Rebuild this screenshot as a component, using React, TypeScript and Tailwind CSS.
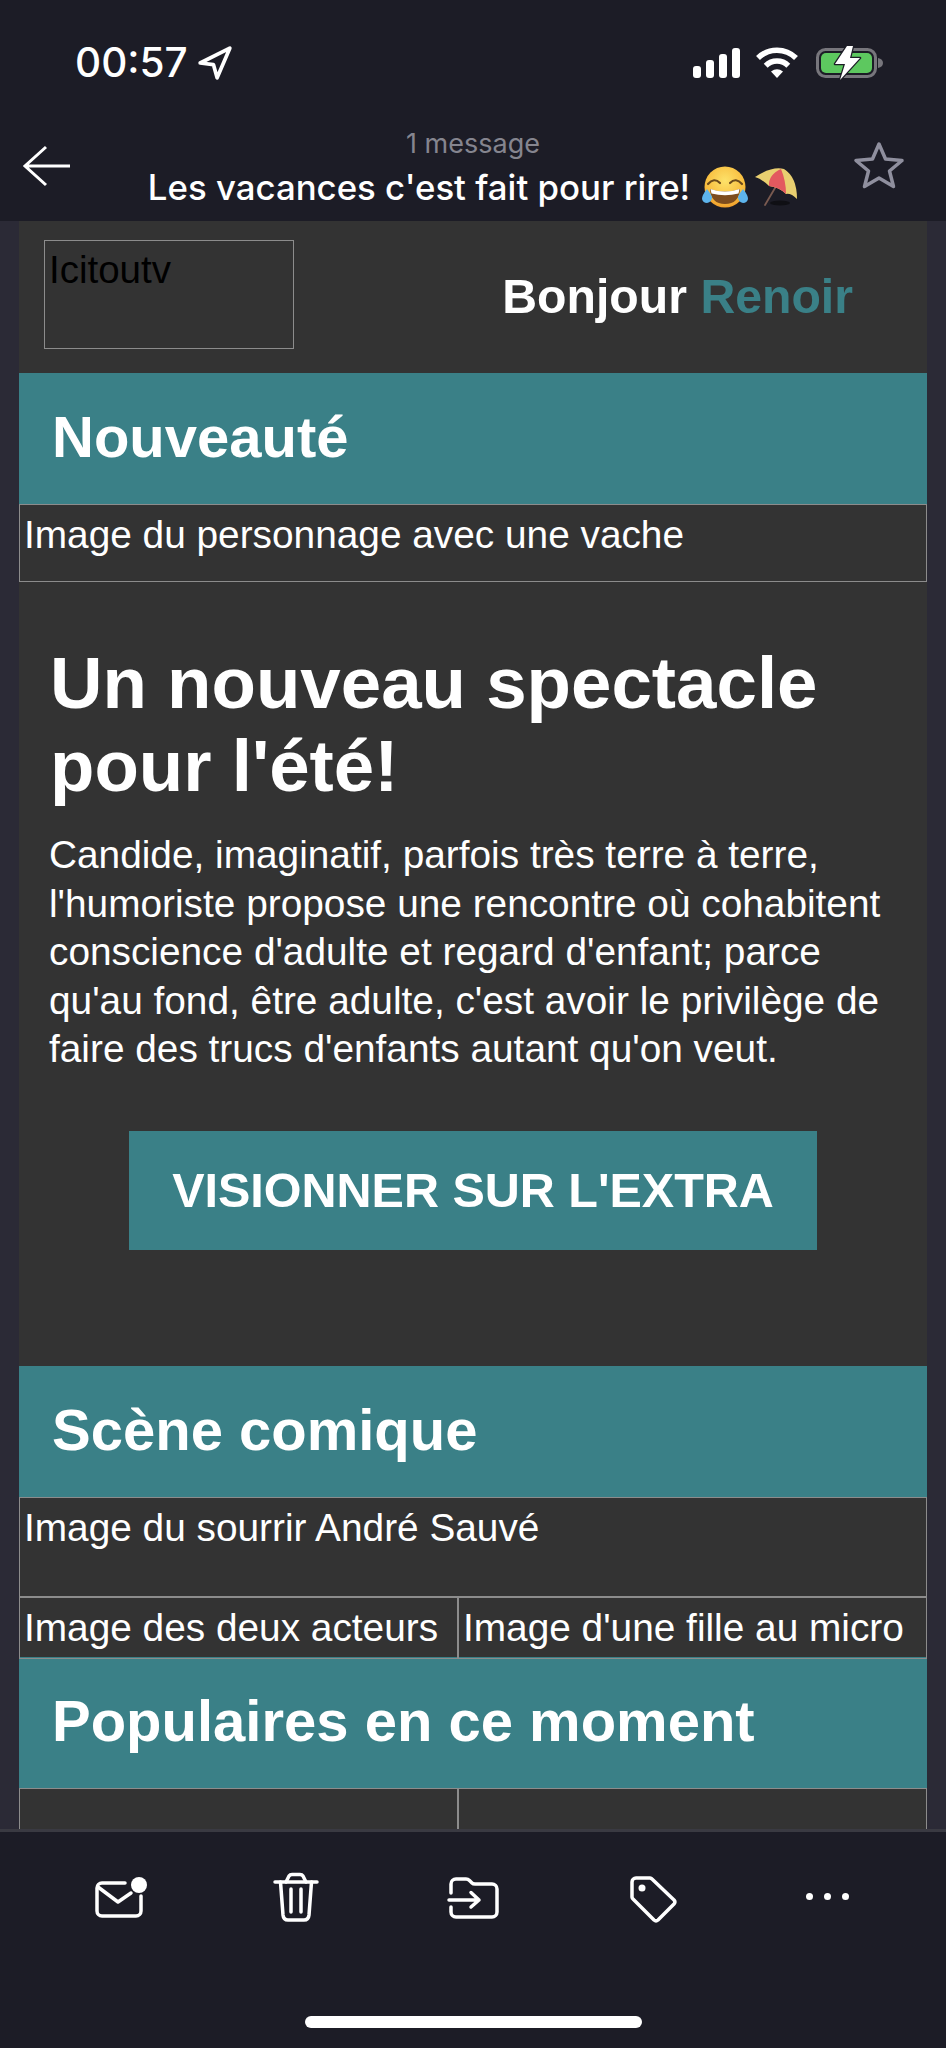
const helvetica = "font-['Liberation_Sans',Arial,sans-serif]";

function StatusBar() {
  return (
    <div className="flex h-[126px] items-start justify-between pt-[41px] pl-[75px] pr-[62px]">
      <div className="flex items-center gap-[9px] text-[40.5px] font-medium leading-[44px] text-white">
        <span>00:57</span>
        <svg width="36" height="36" viewBox="0 0 34 34" fill="none" stroke="white" strokeWidth="3.5" strokeLinejoin="round">
          <path d="M3 17 L31 3 L19 31 L15.5 18.5 Z" />
        </svg>
      </div>
      <div className="flex items-center gap-[16px] pt-[4px]">
        <svg width="48" height="32" viewBox="0 0 48 32" fill="white">
          <rect x="1" y="19" width="8" height="12" rx="3" />
          <rect x="14" y="13" width="8" height="18" rx="3" />
          <rect x="27" y="7" width="8" height="24" rx="3" />
          <rect x="40" y="1" width="8" height="30" rx="3" />
        </svg>
        <svg width="42" height="32" viewBox="0 0 42 32" fill="none" stroke="white" strokeWidth="5.5">
          <path d="M2 11 A27 27 0 0 1 40 11" />
          <path d="M9.7 18.7 A16 16 0 0 1 32.3 18.7" />
          <path d="M21 31 L15 24.5 Q21 20 27 24.5 Z" fill="white" stroke="none" />
        </svg>
        <svg width="70" height="36" viewBox="0 0 70 36" fill="none">
          <rect x="3.5" y="4.5" width="58" height="27" rx="8" stroke="#77767c" strokeWidth="3" />
          <rect x="7" y="8" width="51" height="20" rx="5" fill="#5dc85f" />
          <path d="M64 13 Q69 14 69 18 Q69 22 64 23 Z" fill="#77767c" />
          <path d="M33 1 L21 19 L31 19 L26 35 L46 13 L36 13 L39 1 Z" fill="white" stroke="#1c1c26" strokeWidth="2.5" strokeLinejoin="round" paintOrder="stroke" />
        </svg>
      </div>
    </div>
  );
}

function LaughEmoji() {
  return (
    <svg width="48" height="42" viewBox="0 0 48 42">
      <defs>
        <radialGradient id="face" cx="50%" cy="35%" r="70%">
          <stop offset="0%" stopColor="#fde26a" />
          <stop offset="70%" stopColor="#f8bb3c" />
          <stop offset="100%" stopColor="#ec9528" />
        </radialGradient>
      </defs>
      <circle cx="24" cy="21" r="20.5" fill="url(#face)" />
      <path d="M7 18 Q13 11 19 17 M29 17 Q35 11 41 18" fill="none" stroke="#6b4a1c" strokeWidth="2.2" strokeLinecap="round" />
      <path d="M9 23 Q24 28 39 23 Q38 38 24 38 Q10 38 9 23 Z" fill="#7d4c1e" />
      <path d="M9.5 23 Q24 28 38.5 23 L37.5 27.5 Q24 31 10.5 27.5 Z" fill="white" />
      <path d="M6 23 Q1 29 1 33 Q2 37 6 37 Q11 36 11 31 Q10 28 6 23 Z" fill="#5db4ec" />
      <path d="M42 23 Q47 29 47 33 Q46 37 42 37 Q37 36 37 31 Q38 28 42 23 Z" fill="#5db4ec" />
    </svg>
  );
}

function UmbrellaEmoji() {
  return (
    <svg width="44" height="40" viewBox="0 0 44 40">
      <ellipse cx="26" cy="36" rx="10" ry="2.5" fill="#0f0f14" />
      <path d="M11 38 L31 4" stroke="#7a5a50" strokeWidth="1.8" strokeLinecap="round" />
      <path d="M1 10 Q18 -1 30 2 Q43 10 43 32 Q37 26 32 27 Q25 20 15 19 Q8 12 1 10 Z" fill="#e9cf70" />
      <path d="M15 19 Q14 8 27 2 Q32 14 32 27 Q25 20 15 19 Z" fill="#e3595f" />
    </svg>
  );
}

function NavBar() {
  return (
    <div className="flex h-[95px] items-start">
      <div className="w-[94px] pl-[22px] pt-[18px]">
        <svg width="52" height="44" viewBox="0 0 52 44" fill="none" stroke="white" strokeWidth="3">
          <path d="M3 22 H48 M24 3 L3 22 L24 41" />
        </svg>
      </div>
      <div className="flex flex-1 flex-col items-center">
        <p className="text-[27px] leading-[36px] text-[#85858f]">1 message</p>
        <div className="flex items-center gap-[5px] whitespace-nowrap">
          <span className="mr-[6px] text-[34.8px] font-medium leading-[50px] text-white">Les vacances c'est fait pour rire!</span>
          <LaughEmoji />
          <UmbrellaEmoji />
        </div>
      </div>
      <div className="flex w-[94px] justify-end pr-[41px] pt-[15px]">
        <svg width="52" height="48" viewBox="0 0 52 48" fill="none" stroke="#8f8f9e" strokeWidth="3.5" strokeLinejoin="round">
          <path d="M26 3 L32.5 18 L49 19.5 L36.5 30 L40.5 45.5 L26 37 L11.5 45.5 L15.5 30 L3 19.5 L19.5 18 Z" />
        </svg>
      </div>
    </div>
  );
}

function SectionHead({ title }: { title: string }) {
  return (
    <div className="flex h-[131px] items-center bg-[#3a8087] pb-[3px] pl-[33px]">
      <h2 className="text-[58px] font-bold leading-none text-white">{title}</h2>
    </div>
  );
}

function Cell({ label, className }: { label?: string; className?: string }) {
  return <div className={`border border-[#8c8c8c] pl-[4px] text-[38.8px] leading-[60px] text-white ${className ?? ""}`}>{label}</div>;
}

function ToolBar() {
  return (
    <div className="flex h-[216px] flex-col bg-[#1c1c26]">
      <div className="grid h-[184px] grid-cols-5 items-start px-[30px] pt-[39px]">
        <div className="flex justify-center pl-[6px] pt-[3px]">
          <svg width="60" height="50" viewBox="0 0 60 50" fill="none" stroke="white" strokeWidth="3.5" strokeLinecap="round" strokeLinejoin="round">
            <path d="M33 9 H10 a5 5 0 0 0 -5 5 V37 a5 5 0 0 0 5 5 H44 a5 5 0 0 0 5 -5 V22" />
            <path d="M6 13 L26 28 L39 19" />
            <circle cx="47" cy="11" r="8" fill="white" stroke="none" />
          </svg>
        </div>
        <div className="flex justify-center pl-[1px]">
          <svg width="50" height="54" viewBox="0 0 50 54" fill="none" stroke="white" strokeWidth="3.5" strokeLinecap="round" strokeLinejoin="round">
            <path d="M4 11 H46" />
            <path d="M15 11 L18 5 Q19 3.5 21 3.5 H29 Q31 3.5 32 5 L35 11" />
            <path d="M9.5 11 L12 44 Q12.5 49 17 49 H33 Q37.5 49 38 44 L40.5 11" />
            <path d="M20 18 V41 M30 18 V41" />
          </svg>
        </div>
        <div className="flex justify-center pl-[2px] pt-[4px]">
          <svg width="54" height="46" viewBox="0 0 54 46" fill="none" stroke="white" strokeWidth="3.5" strokeLinecap="round" strokeLinejoin="round">
            <path d="M4 18 V9 a5 5 0 0 1 5 -5 H19 Q21 4 22.5 5.5 L25 8 Q26 9 28 9 H45 a5 5 0 0 1 5 5 V37 a5 5 0 0 1 -5 5 H9 a5 5 0 0 1 -5 -5 V32" />
            <path d="M2 25 H32 M24 17.5 L32 25 L24 32" />
          </svg>
        </div>
        <div className="flex justify-center pl-[6px] pt-[3px]">
          <svg width="50" height="50" viewBox="0 0 50 50" fill="none" stroke="white" strokeWidth="3.5" strokeLinejoin="round">
            <path d="M8 4 H22 a3 3 0 0 1 2 1 L46 26 a3 3 0 0 1 0 4 L30 46 a3 3 0 0 1 -4 0 L5 25 a3 3 0 0 1 -1 -2 V8 a4 4 0 0 1 4 -4 Z" />
            <circle cx="14" cy="14" r="3.5" fill="white" stroke="none" />
          </svg>
        </div>
        <div className="flex h-[50px] items-center justify-center gap-[11px]">
          <span className="h-[7px] w-[7px] rounded-full bg-white" />
          <span className="h-[7px] w-[7px] rounded-full bg-white" />
          <span className="h-[7px] w-[7px] rounded-full bg-white" />
        </div>
      </div>
      <div className="mx-auto h-[12px] w-[337px] rounded-full bg-white" />
    </div>
  );
}

export default function App() {
  return (
    <div className="flex h-[2048px] w-[946px] flex-col overflow-hidden bg-[#1c1c26] font-['Inter',sans-serif]">
      <header className="h-[221px]">
        <StatusBar />
        <NavBar />
      </header>

      <main className={`${helvetica} flex-1 overflow-hidden border-b-[3px] border-[#3a3a42] bg-[#2b2a36] px-[19px]`}>
        <div className="bg-[#333333]">
          <div className="flex h-[152px] items-start justify-between pl-[25px] pr-[74px] pt-[19px]">
            <div className="h-[109px] w-[250px] border border-[#8c8c8c] pl-[4px] text-[38.5px] leading-[58px] text-black">Icitoutv</div>
            <p className="pt-[26px] text-[48.2px] font-bold leading-[60px] text-white">
              Bonjour <span className="text-[#3a8087]">Renoir</span>
            </p>
          </div>

          <SectionHead title="Nouveauté" />
          <Cell label="Image du personnage avec une vache" className="h-[78px]" />

          <div className="pl-[30px] pr-[10px] pt-[59px]">
            <h1 className="ml-[1px] text-[72.7px] font-bold leading-[83px] text-white">
              Un nouveau spectacle
              <br />
              pour l'été!
            </h1>
            <p className="mt-[24px] whitespace-nowrap text-[38.8px] leading-[48.5px] text-white">
              Candide, imaginatif, parfois très terre à terre,
              <br />
              l'humoriste propose une rencontre où cohabitent
              <br />
              conscience d'adulte et regard d'enfant; parce
              <br />
              qu'au fond, être adulte, c'est avoir le privilège de
              <br />
              faire des trucs d'enfants autant qu'on veut.
            </p>
          </div>

          <div className="ml-[110px] mt-[57px] flex h-[119px] w-[688px] items-center justify-center bg-[#3a8087] text-[48.5px] font-bold text-white">
            VISIONNER SUR L'EXTRA
          </div>

          <div className="h-[116px]" />

          <SectionHead title="Scène comique" />
          <Cell label="Image du sourrir André Sauvé" className="h-[100px]" />
          <div className="grid h-[60px] grid-cols-[439px_1fr]">
            <Cell label="Image des deux acteurs" />
            <Cell label="Image d'une fille au micro" />
          </div>
          <SectionHead title="Populaires en ce moment" />
          <div className="grid h-[60px] grid-cols-[439px_1fr]">
            <Cell />
            <Cell />
          </div>
        </div>
      </main>

      <ToolBar />
    </div>
  );
}
